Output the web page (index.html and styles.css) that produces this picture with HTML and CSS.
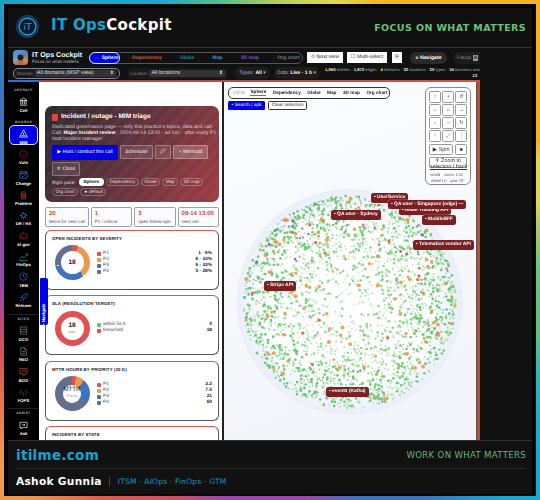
FILE: index.html
```html
<!DOCTYPE html>
<html lang="en">
<head>
  <meta charset="UTF-8">
  <title>IT Ops Cockpit</title>
  <link rel="stylesheet" href="styles.css">
</head>
<body>
<div class="rainbow">
  <div class="shell">

    <!-- banner -->
    <header class="banner">
      <div class="banner-left">
        <svg class="banner-logo" viewBox="0 0 24 24" width="23" height="23">
          <circle cx="12" cy="12" r="11.2" fill="#0d1a2b" stroke="#1d3f6e" stroke-width="1.4"/>
          <circle cx="12" cy="12" r="8.8" fill="none" stroke="#12a5d2" stroke-width="1.5"/>
          <text x="12" y="15.6" text-anchor="middle" class="logo-text">iT</text>
        </svg>
        <div class="banner-title"><span class="cyan">IT Ops</span><span>Cockpit</span></div>
      </div>
      <div class="banner-tag">FOCUS ON WHAT MATTERS</div>
    </header>

    <section class="app">
      <!-- toolbar -->
      <div class="top">
        <div class="top-row">
          <div class="brand">
            <div class="brand-logo"></div>
            <div>
              <div class="brand-name">IT Ops Cockpit</div>
              <div class="brand-sub">Focus on what matters.</div>
            </div>
          </div>
          <div class="tabs">
            <span class="tab tab-on">Sphere</span>
            <span class="tab t-red">Dependency</span>
            <span class="tab t-teal">Globe</span>
            <span class="tab t-blue">Map</span>
            <span class="tab t-purple">3D map</span>
            <span class="tab t-grey">Org chart</span>
          </div>
          <span class="wbtn w-next">⟐ Next view</span>
          <span class="wbtn w-multi">☐ Multi-select</span>
          <span class="wbtn w-x">⎘</span>
          <span class="nav-pill">≡ Navigate</span>
          <span class="focus-pill">Focus <b>A</b></span>
        </div>
        <div class="top-row row2">
          <div class="sel sel-domain"><span class="sel-lab">Domain</span><span class="sel-box">All domains (MSP view)<i>⬍</i></span></div>
          <div class="sel sel-loc"><span class="sel-lab">Location</span><span class="sel-box">All locations<i>⬍</i></span></div>
          <div class="drop drop-types">Types: <b>All</b> ▾</div>
          <div class="drop drop-data">Data: <b>Live · 1 h</b> ▾</div>
          <div class="stats">
            <div class="stats-line"><b>1,060</b> entities · <b>1,873</b> edges · <b>4</b> domains · <b>32</b> locations · <b>20</b> types · <b>15</b> business areas</div>
            <div class="stats-more"><b>13</b></div>
          </div>
        </div>
      </div>
      <div class="stripe"></div>

      <div class="work">
        <!-- left rail -->
        <nav class="rail">
          <div class="rail-group">
            <div class="rail-head">OPERATE</div>
            <div class="rail-item">
              <svg viewBox="0 0 10 10" class="ico" stroke="#fff"><path d="M1 4 5 1l4 3H1ZM2 4v4M4 4v4M6 4v4M8 4v4M1 9h8"/></svg>
              <span>Cell</span>
            </div>
          </div>
          <div class="rail-group">
            <div class="rail-head">BOARDS</div>
            <div class="rail-item rail-on">
              <svg viewBox="0 0 10 10" class="ico" stroke="#fff"><path d="M5 1 9.5 9h-9ZM5 4v2.5M2.5 7.5h5"/></svg>
              <span>MIM</span>
            </div>
            <div class="rail-item">
              <svg viewBox="0 0 10 10" class="ico" stroke="#8f1d22"><path d="M5 .8 9 2.3V5c0 2.2-1.8 3.6-4 4.3C2.8 8.6 1 7.2 1 5V2.3ZM3.5 5 4.6 6l2-2"/></svg>
              <span>Vuln</span>
            </div>
            <div class="rail-item">
              <svg viewBox="0 0 10 10" class="ico" stroke="#2f77e6"><path d="M1 2h8v7H1ZM1 4h8M3 1v2M7 1v2M3.5 6.5 4.6 7.5l2-2"/></svg>
              <span>Change</span>
            </div>
            <div class="rail-item">
              <svg viewBox="0 0 10 10" class="ico" stroke="#b8393a"><path d="M3 1h4v3H3ZM2.5 4h5v2.5h-5ZM3 6.5h4V9H3Z"/></svg>
              <span>Problem</span>
            </div>
            <div class="rail-item">
              <svg viewBox="0 0 10 10" class="ico" stroke="#2f77e6"><circle cx="5" cy="5" r="2.2"/><path d="M5 .8v1.8M5 7.4v1.8M.8 5h1.8M7.4 5h1.8M2 2l1.3 1.3M6.7 6.7 8 8M8 2 6.7 3.3M3.3 6.7 2 8"/></svg>
              <span>DR / HA</span>
            </div>
            <div class="rail-item">
              <svg viewBox="0 0 10 10" class="ico" stroke="#8f1d22"><path d="M1.5 3h7v5.5h-7ZM5 1v2M3.5 5h.5M6 5h.5M3.5 7h3M.5 5v2M9.5 5v2"/></svg>
              <span>AI gov</span>
            </div>
            <div class="rail-item">
              <svg viewBox="0 0 10 10" class="ico" stroke="#1c8f8c"><path d="M.5 8 3.5 5l2 1.5L9.5 2M7.5 2h2v2M.5 9.5h9"/></svg>
              <span>FinOps</span>
            </div>
            <div class="rail-item">
              <svg viewBox="0 0 10 10" class="ico" stroke="#3d5be0"><circle cx="5" cy="5" r="4.2"/><path d="M5 2.3V5l2 2"/></svg>
              <span>TBM</span>
            </div>
            <div class="rail-item">
              <svg viewBox="0 0 10 10" class="ico" stroke="#2f77e6"><path d="M9.3.7C6.500.9 4.600 2.400 3.400 5l1.600 1.600C7.600 5.400 9.100 3.500 9.300.7ZM3.400 5 1.500 5.300M5 6.600 4.700 8.500M2.800 7.200 1 9"/></svg>
              <span>Release</span>
            </div>
          </div>
          <div class="rail-group ruled">
            <div class="rail-head">SITES</div>
            <div class="rail-item">
              <svg viewBox="0 0 10 10" class="ico" stroke="#77797d"><path d="M1.5 1h7v8h-7ZM1.5 3.7h7M1.5 6.3h7"/></svg>
              <span>DCO</span>
            </div>
            <div class="rail-item">
              <svg viewBox="0 0 10 10" class="ico" stroke="#77797d"><path d="M2 .8h4l2.3 2.3v6.1H2ZM6 .8v2.3h2.3M3.5 5h3.3M3.5 7h3.3"/></svg>
              <span>REO</span>
            </div>
            <div class="rail-item">
              <svg viewBox="0 0 10 10" class="ico" stroke="#b8393a"><path d="M1 1.5h8v6H1ZM3 3.5h1.500v2M5.500 3.500H7v2M3 9h4"/></svg>
              <span>BOO</span>
            </div>
            <div class="rail-item">
              <svg viewBox="0 0 10 10" class="ico" stroke="#3a3d42"><path d="M5 4.4v4.6M3.4 3a2.3 2.3 0 0 0 0 3.2M6.6 3a2.3 2.3 0 0 1 0 3.2M2 1.7a4.3 4.3 0 0 0 0 5.8M8 1.7a4.3 4.3 0 0 1 0 5.8"/></svg>
              <span>FOPS</span>
            </div>
          </div>
          <div class="rail-group ruled ruled-last">
            <div class="rail-head">ASSIST</div>
            <div class="rail-item">
              <svg viewBox="0 0 10 10" class="ico" stroke="#e8e8e8"><path d="M1 1.5h8v5.700H4L2.500 9V7.200H1ZM3.300 4.300h3.400M6 3.300v2"/></svg>
              <span>Ask</span>
            </div>
          </div>
        </nav>

        <!-- practice page -->
        <main class="page">
          <div class="side-tab"><span>• Navigate</span></div>

          <div class="hero">
            <div class="hero-title"><span class="hero-ico"></span>Incident / outage - MIM triage</div>
            <p class="hero-text">Dedicated governance page — only this practice's topics, data and call.<br>Call: <b>Major incident review</b> · 2026-09-14 13:00 · ad hoc · after every P1 ·<br>host incident manager</p>
            <div class="hero-btns">
              <span class="hbtn hbtn-main">▶ Host / conduct this call</span>
              <span class="hbtn hbtn-sch">Scheduler</span>
              <span class="hbtn hbtn-ico">🖉</span>
              <span class="hbtn hbtn-mer">+ Mermaid</span>
              <span class="hbtn hbtn-cls">✕ Close</span>
            </div>
            <div class="hero-chips">
              <span class="chip-lab">Right pane:</span>
              <span class="chip chip-on">Sphere</span>
              <span class="chip">Dependency</span>
              <span class="chip">Globe</span>
              <span class="chip">Map</span>
              <span class="chip">3D map</span>
              <span class="chip">Org chart</span>
              <span class="chip">★ default</span>
            </div>
          </div>

          <div class="kpis">
            <div class="kpi"><b>20</b><span>items for next call</span></div>
            <div class="kpi"><b>1</b><span>P1 / critical</span></div>
            <div class="kpi"><b>3</b><span>open follow-ups</span></div>
            <div class="kpi"><b>09-14 13:00</b><span>next call</span></div>
          </div>

          <div class="chart-card">
            <h3>OPEN INCIDENTS BY SEVERITY</h3>
            <div class="chart-body">
              <div class="ring ring-sev"><div class="hole"><b>18</b></div></div>
              <ul class="legend">
                <li><i class="d-red"></i>P1<b>1 · 6%</b></li>
                <li><i class="d-org"></i>P2<b>6 · 33%</b></li>
                <li><i class="d-blu"></i>P3<b>6 · 33%</b></li>
                <li><i class="d-sla"></i>P4<b>5 · 28%</b></li>
              </ul>
            </div>
          </div>

          <div class="chart-card">
            <h3>SLA (RESOLUTION TARGET)</h3>
            <div class="chart-body">
              <div class="ring ring-sla"><div class="hole"><b>18</b><small>open</small></div></div>
              <ul class="legend">
                <li><i class="d-grn"></i>within SLA<b>0</b></li>
                <li><i class="d-red"></i>breached<b>18</b></li>
              </ul>
            </div>
          </div>

          <div class="chart-card">
            <h3>MTTR HOURS BY PRIORITY (30 D)</h3>
            <div class="chart-body">
              <div class="ring ring-mttr"><div class="hole hole-sm"><b class="wide">MTTR</b><small>Priority</small></div></div>
              <ul class="legend">
                <li><i class="d-red"></i>P1<b>3.2</b></li>
                <li><i class="d-org"></i>P2<b>7.5</b></li>
                <li><i class="d-blu"></i>P3<b>21</b></li>
                <li><i class="d-sla"></i>P4<b>60</b></li>
              </ul>
            </div>
          </div>

          <div class="chart-card">
            <h3>INCIDENTS BY STATE</h3>
          </div>
        </main>

        <!-- sphere -->
        <section class="pane">
          <canvas id="sphere" class="sphere" width="252" height="357"></canvas>

          <div class="viewbar">
            <span class="vb-lab">VIEW</span>
            <span class="vb vb-on">Sphere</span>
            <span class="vb">Dependency</span>
            <span class="vb">Globe</span>
            <span class="vb">Map</span>
            <span class="vb">3D map</span>
            <span class="vb">Org chart</span>
          </div>
          <div class="pane-btns">
            <span class="pbtn pbtn-blue">• Search / apk</span>
            <span class="pbtn">Clear selection</span>
          </div>

          <div class="ctrls">
            <div class="ctrl-grid">
              <span>↑</span><span>+</span><span>↺</span>
              <span>←</span><span>⌂</span><span>→</span>
              <span>↓</span><span>−</span><span>↻</span>
              <span>↑</span><span>⤢</span><span>⋮</span>
            </div>
            <div class="ctrl-spin"><span class="spin">▶ Spin</span><span class="stop">■</span></div>
            <div class="ctrl-zoom">✛ Zoom to<br><u>selection / back</u></div>
            <div class="ctrl-note">world · zoom 1.0x ·<br>detail L0 · yaw 70°</div>
          </div>

          <span class="tag tag-tracking">• Issue Tracking API</span>
          <span class="tag tag-user">• UserService</span>
          <span class="tag tag-qasg">• QA user · Singapore (edge) —</span>
          <span class="tag tag-mobile">• MobileBFF</span>
          <span class="tag tag-qasy">• QA user · Sydney</span>
          <span class="tag tag-tele">• Telematics vendor API</span>
          <span class="tag tag-stripe">• Stripe API</span>
          <span class="tag tag-kafka">• events (Kafka)</span>
        </section>
      </div>
    </section>

    <!-- footer -->
    <footer class="foot">
      <div class="foot-top">
        <span class="foot-site">itilme.com</span>
        <span class="foot-tag">WORK ON WHAT MATTERS</span>
      </div>
      <div class="foot-bottom">
        <span class="foot-name">Ashok Gunnia</span>
        <span class="foot-topics">ITSM · AIOps · FinOps · GTM</span>
      </div>
    </footer>

  </div>
</div>
<script src="sphere.js"></script>
</body>
</html>
```

FILE: styles.css
```css
* {
  box-sizing: border-box;
}

html,
body {
  margin: 0;
  padding: 0;
  background: #000;
}

.rainbow {
  width: 540px;
  height: 500px;
  padding: 4px;
  background: conic-gradient(#a8cc60 0deg, #c8d456 7deg, #e0d84a 15deg, #f4b223 25deg, #f4b223 68deg, #e0d84a 72deg, #e0d84a 80deg, #b5c870 84deg, #6cc07a 95deg, #5fbf85 108deg, #2fb5b5 115deg, #15a9d0 127deg, #15a9d0 137deg, #3f72bf 148deg, #3f72bf 160deg, #9a48a8 172deg, #9a48a8 190deg, #c94f68 200deg, #e25a50 214deg, #ee9a4a 225deg, #ee9a4a 232deg, #e0604f 245deg, #c94f68 252deg, #9a48a8 262deg, #9a48a8 280deg, #3f72bf 288deg, #3f72bf 300deg, #1aa6c8 315deg, #19a7cf 335deg, #5fbf85 350deg, #a8cc60 360deg);
  overflow: hidden;
}

.shell {
  height: 492px;
  background: #111;
  border: 4px solid #050505;
  display: flex;
  flex-direction: column;
  font-family: "DejaVu Sans", sans-serif;
}

/* banner */
.banner {
  height: 40px;
  flex: none;
  background: #101010;
  border-bottom: 1px solid #333;
  padding: 0 6px 2px 8px;
  display: flex;
  justify-content: space-between;
  align-items: center;
}

.banner-left {
  display: flex;
  align-items: center;
  gap: 12px;
}

.logo-text {
  font: 10px "DejaVu Sans", sans-serif;
  fill: #12a5d2;
}

.banner-title {
  font-size: 15px;
  font-weight: bold;
  letter-spacing: 0.3px;
  color: #fff;
  margin-top: -3px;
}

.cyan {
  color: #12a5d2;
}

.banner-tag {
  font-size: 9.5px;
  font-weight: bold;
  letter-spacing: 0.4px;
  color: #6cc07a;
  margin-top: 2px;
}

/* app screenshot */
.app {
  flex: none;
  width: 472px;
  height: 392px;
  overflow: hidden;
  background: #111;
  display: flex;
  flex-direction: column;
  font-family: "Liberation Sans", sans-serif;
  text-rendering: geometricPrecision;
  filter: blur(0.3px);
}

.top {
  height: 33px;
  flex: none;
  padding: 3px 0 0 5px;
}

.top-row {
  display: flex;
  align-items: center;
  height: 13px;
  white-space: nowrap;
  color: #ddd;
}

.row2 {
  margin-top: 3px;
  height: 12px;
}

.brand {
  width: 76px;
  flex: none;
  display: flex;
  align-items: center;
  gap: 4px;
}

.brand-logo {
  width: 15px;
  height: 15px;
  flex: none;
  border-radius: 4px;
  background: radial-gradient(circle, #18202b 0 28%, transparent 30%), conic-gradient(#5f8fd0, #5a7fa8, #d88c46, #a86a3a, #8fa0b0, #4f94d0, #5f8fd0);
}

.brand-name {
  font-size: 7.1px;
  font-weight: bold;
  color: #fff;
  line-height: 8px;
}

.brand-sub {
  font-size: 4.6px;
  color: #bbb;
  line-height: 6px;
}

.tabs {
  width: 214px;
  flex: none;
  height: 12px;
  border: 1px solid #555;
  border-radius: 6px;
  display: flex;
  align-items: center;
  font-size: 5px;
  font-weight: bold;
}

.tab {
  padding: 0 6.8px;
}

.tab::before {
  content: "·";
  margin-right: 3px;
  opacity: 0.5;
}

.tab-on {
  width: 35px;
  height: 12px;
  margin-left: -1px;
  padding: 0 0 0 7px;
  line-height: 10px;
  background: #0000e6;
  color: #fff;
  border: 1px solid #dfe3f0;
  border-radius: 6px;
  margin-right: 1px;
}

.t-red {
  color: #d9573f;
}

.t-teal {
  color: #1f8a8c;
}

.t-blue {
  color: #3d8ee0;
}

.t-purple {
  color: #7d4fc0;
}

.t-grey {
  color: #777;
}

.wbtn {
  margin-left: 4px;
  height: 11px;
  line-height: 11px;
  flex: none;
  background: #fff;
  color: #222;
  font-size: 5.2px;
  text-align: center;
}

.w-next {
  width: 36px;
}

.w-multi {
  width: 40px;
}

.w-x {
  width: 10px;
  margin-left: 5px;
}

.nav-pill {
  margin-left: 8px;
  width: 37px;
  height: 12px;
  line-height: 12px;
  flex: none;
  text-align: center;
  background: #2a2a2a;
  color: #fff;
  border-radius: 6px;
  font-size: 5.2px;
  font-weight: bold;
}

.focus-pill {
  margin-left: 6px;
  padding-left: 4px;
  height: 12px;
  line-height: 12px;
  width: 40px;
  flex: none;
  background: #1c1c1c;
  color: #999;
  border-radius: 6px;
  font-size: 5.2px;
}

.focus-pill b {
  background: #999;
  color: #222;
  padding: 0 1px;
}

.sel {
  height: 11px;
  display: flex;
  align-items: center;
  border-radius: 5px;
  background: #1a1a1a;
  font-size: 4.6px;
  color: #888;
  padding: 0 3px;
  gap: 2px;
  flex: none;
}

.sel-domain {
  width: 107px;
  border: 1px solid #7d8496;
}

.sel-loc {
  width: 101px;
  margin-left: 7px;
}

.sel-box {
  flex: 1;
  position: relative;
  height: 7px;
  line-height: 7px;
  font-size: 5.4px;
  color: #ddd;
  background: #333;
  padding-left: 2px;
  border-radius: 1px;
}

.sel-box i {
  position: absolute;
  right: 2px;
  top: 0;
  font-style: normal;
  font-size: 5px;
}

.drop {
  height: 12px;
  line-height: 12px;
  flex: none;
  font-size: 5px;
  text-align: center;
  background: #1c1c1c;
  border-radius: 5px;
  color: #bbb;
}

.drop b {
  color: #fff;
}

.drop-types {
  width: 35px;
  margin-left: 7px;
}

.drop-data {
  width: 45px;
  margin-left: 4px;
}

.stats {
  margin-left: 6px;
  width: 155px;
  flex: none;
  font-size: 4.2px;
  line-height: 5.5px;
  color: #aaa;
  overflow: hidden;
  margin-top: -1px;
}

.stats b {
  color: #eee;
}

.stats-more {
  text-align: right;
  padding-right: 3px;
}

.stripe {
  height: 2px;
  flex: none;
  margin-top: -1px;
  background: linear-gradient(to right, #2f6fd0 0 31px, #a0434a 31px, #b84a48 45%, #d9503f);
}

.work {
  flex: 1;
  display: flex;
  min-height: 0;
}

/* rail */
.rail {
  width: 31px;
  flex: none;
  background: #000;
  padding-top: 5.5px;
  text-align: center;
  color: #fff;
}

.rail-group {
  margin-top: 7px;
}

.rail-group:first-child {
  margin-top: 0;
}

.rail-head {
  height: 5px;
  line-height: 5px;
  font-size: 3.4px;
  font-weight: bold;
  letter-spacing: 0.4px;
  color: #bbb;
}

.ruled {
  margin-top: 6px;
  padding-top: 1.5px;
  border-top: 1px solid #222;
}

.ruled-last {
  margin-top: 4.5px;
}

.ruled-last .rail-head {
  margin-top: 1px;
}

.rail-item {
  height: 20.4px;
  padding-top: 4.5px;
  font-size: 4.2px;
  font-weight: bold;
  display: flex;
  flex-direction: column;
  align-items: center;
}

.rail-on {
  background: #0000e6;
  border: 1px solid #dde;
  border-radius: 5px;
  margin: 0 1px;
  padding-top: 3.5px;
}

.ico {
  width: 9px;
  height: 9px;
  flex: none;
  fill: none;
  stroke-width: 0.8;
  margin-bottom: 1.5px;
}

/* left page */
.page {
  position: relative;
  width: 185px;
  flex: none;
  background: #fff;
  border-right: 2px solid #222;
  padding: 24px 3px 0 6px;
  overflow: hidden;
  color: #222;
}

.side-tab {
  position: absolute;
  left: 1px;
  top: 196px;
  width: 8px;
  height: 47px;
  background: #0000e6;
  border-radius: 1px 2px 2px 1px;
  color: #fff;
  font-size: 4.5px;
  font-weight: bold;
}

.side-tab span {
  display: block;
  writing-mode: vertical-rl;
  transform: rotate(180deg);
  line-height: 8px;
  height: 47px;
  text-align: left;
}

.hero {
  height: 95.5px;
  border-radius: 7px;
  padding: 6px 7px;
  color: #fff;
  background: repeating-linear-gradient(135deg, rgba(255, 255, 255, 0.025) 0 5px, rgba(0, 0, 0, 0.025) 5px 10px), linear-gradient(120deg, #2e2a31 0%, #5f333d 45%, #a23e44 100%);
}

.hero-title {
  font-size: 6.5px;
  font-weight: bold;
  display: flex;
  align-items: center;
  gap: 3px;
  line-height: 10px;
}

.hero-ico {
  width: 6px;
  height: 7px;
  background: #d9483c;
  border-radius: 1px;
}

.hero-text {
  margin: 2px 0 3px;
  font-size: 5.1px;
  line-height: 6px;
  color: #d8d0d4;
  white-space: nowrap;
}

.hero-text b {
  color: #fff;
}

.hero-btns {
  display: flex;
  flex-wrap: wrap;
  gap: 2px;
}

.hbtn {
  height: 14px;
  line-height: 12px;
  padding: 0 2px;
  font-size: 5px;
  border: 1px solid rgba(255, 255, 255, 0.28);
  border-radius: 1.5px;
  background: rgba(255, 255, 255, 0.1);
  color: #f3e9ea;
  white-space: nowrap;
  text-align: center;
}

.hbtn-main {
  width: 66px;
  height: 15px;
  line-height: 15px;
  border: 0;
  background: #0000e6;
  color: #fff;
}

.hbtn-sch {
  width: 33px;
}

.hbtn-ico {
  width: 16px;
}

.hbtn-mer {
  width: 35px;
  background: rgba(255, 255, 255, 0.2);
}

.hbtn-cls {
  width: 28px;
  padding: 0;
}

.hero-chips {
  display: flex;
  flex-wrap: wrap;
  align-items: center;
  gap: 2px;
  margin-top: 2px;
  font-size: 4.6px;
}

.chip-lab {
  margin-right: 1px;
  color: #ddd;
}

.chip {
  height: 8px;
  line-height: 6px;
  padding: 0 2.5px;
  border: 1px solid rgba(255, 255, 255, 0.28);
  border-radius: 4px;
  color: #eadcdd;
}

.chip-on {
  background: #fff;
  color: #222;
  font-weight: bold;
  padding: 0 4px;
}

.kpis {
  display: grid;
  grid-template-columns: repeat(4, 1fr);
  gap: 2px;
  margin: 5.5px 0 3px;
}

.kpi {
  height: 19.5px;
  padding: 2.5px 3px;
  border: 1px solid #9aa0aa;
  border-radius: 2px;
  display: flex;
  flex-direction: column;
  gap: 1px;
  background: #fbfbfd;
}

.kpi b {
  font-size: 6px;
  line-height: 7.5px;
  color: #d9483c;
  white-space: nowrap;
}

.kpi span {
  font-size: 4.6px;
  line-height: 5px;
  color: #555;
  white-space: nowrap;
}

.chart-card {
  height: 60px;
  margin-bottom: 5.5px;
  padding: 5px 6px 0;
  border: 1px solid #555;
  border-top: 1px solid #e05252;
  border-bottom-width: 1.2px;
  border-radius: 6px;
  background: #fff;
}

.chart-card h3 {
  margin: 0;
  font-size: 4.4px;
  line-height: 6px;
  letter-spacing: 0.1px;
  color: #222;
}

.chart-body {
  display: flex;
  align-items: center;
  margin-top: 3.5px;
  padding-left: 2.5px;
}

.ring {
  width: 35px;
  height: 35px;
  flex: none;
  border-radius: 50%;
  display: flex;
  align-items: center;
  justify-content: center;
}

.ring-sev {
  background: conic-gradient(#e05252 0 5.5%, #fff 5.5% 6%, #eb9a4d 6% 38.5%, #fff 38.5% 39%, #3f72bf 39% 71.5%, #fff 71.5% 72%, #646f8e 72% 99.5%, #fff 99.5%);
}

.ring-sla {
  background: conic-gradient(#e05252 0 100%);
}

.ring-mttr {
  background: conic-gradient(#e05252 0 3.5%, #eb9a4d 3.5% 11.7%, #3f72bf 11.7% 34.6%, #646f8e 34.6% 100%);
}

.hole {
  width: 23px;
  height: 23px;
  border-radius: 50%;
  background: #fff;
  display: flex;
  flex-direction: column;
  align-items: center;
  justify-content: center;
  font-size: 6.5px;
  line-height: 8px;
  color: #222;
}

.hole-sm {
  width: 18px;
  height: 18px;
}

.hole .wide {
  font-weight: normal;
  font-size: 6.2px;
  color: #222;
  margin-top: -3px;
}

.hole small {
  font-size: 3.6px;
  line-height: 5px;
  color: #999;
}

.legend {
  list-style: none;
  margin: 0 0 0 7px;
  padding: 0;
  flex: 1;
  font-size: 4.8px;
  color: #444;
}

.legend li {
  display: flex;
  align-items: center;
  height: 6px;
  line-height: 6px;
}

.legend i {
  width: 4px;
  height: 4px;
  margin-right: 2.5px;
  border-radius: 1px;
}

.legend b {
  margin-left: auto;
  color: #222;
}

.d-red {
  background: #e05252;
}

.d-org {
  background: #eb9a4d;
}

.d-blu {
  background: #3f72bf;
}

.d-sla {
  background: #646f8e;
}

.d-grn {
  background: #5dc46a;
}

/* sphere pane */
.pane {
  position: relative;
  flex: 1;
  background: linear-gradient(160deg, #fbfcfe, #f2f4fa);
  border-right: 3.5px solid #c9452f;
  padding: 5px 4px 0;
  overflow: hidden;
  box-shadow: inset -1px 0 0 #555;
}

.sphere {
  position: absolute;
  left: 0;
  top: 0;
}

.viewbar {
  position: relative;
  width: 162px;
  height: 11.5px;
  background: #fff;
  border: 1px solid #333;
  border-radius: 5px;
  display: flex;
  align-items: center;
  padding-left: 4px;
  gap: 6.5px;
  font-size: 4.7px;
  font-weight: bold;
  color: #222;
  white-space: nowrap;
}

.vb-lab {
  color: #999;
  font-weight: normal;
  margin-right: -1px;
}

.vb-on {
  border-bottom: 1px solid #d9483c;
  line-height: 6px;
}

.pane-btns {
  position: relative;
  display: flex;
  gap: 3px;
  margin-top: 2px;
  font-size: 4.8px;
}

.pbtn {
  height: 9.5px;
  line-height: 8px;
  width: 39px;
  text-align: center;
  border: 1px solid #333;
  border-radius: 1.5px;
  background: #fff;
  color: #222;
}

.pbtn-blue {
  width: 37px;
  background: #0000e6;
  border: 0;
  line-height: 9.5px;
  color: #fff;
}

.ctrls {
  position: absolute;
  left: 201px;
  top: 5px;
  width: 46px;
  height: 98px;
  padding: 3px;
  border: 1px solid #888;
  border-radius: 6px;
  background: #fff;
  font-size: 5px;
  color: #333;
}

.ctrl-grid {
  display: grid;
  grid-template-columns: repeat(3, 12px);
  grid-auto-rows: 11.5px;
  gap: 1.5px 1.2px;
}

.ctrl-grid span,
.spin,
.stop {
  border: 1px solid #999;
  border-radius: 1.5px;
  text-align: center;
  line-height: 10px;
  background: #fff;
}

.ctrl-spin {
  display: flex;
  gap: 2px;
  margin-top: 2px;
  height: 11px;
}

.spin {
  width: 25px;
  font-size: 5.5px;
}

.stop {
  width: 12px;
}

.ctrl-zoom {
  width: 38px;
  height: 11px;
  margin-top: 2px;
  border: 1px solid #999;
  border-radius: 1.5px;
  text-align: center;
  white-space: nowrap;
  font-size: 5.4px;
  line-height: 6.5px;
}

.ctrl-note {
  margin-top: 4px;
  text-align: center;
  font-size: 4.1px;
  line-height: 6px;
  color: #555;
  white-space: nowrap;
}

.tag {
  position: absolute;
  height: 9.5px;
  line-height: 9.5px;
  padding: 0 3px;
  background: #7a1f22;
  border-radius: 2.5px;
  box-shadow: 0 0 0 0.5px rgba(255, 255, 255, 0.3);
  color: #fff;
  font-size: 4.9px;
  font-weight: bold;
  white-space: nowrap;
}

.tag-user {
  left: 147px;
  top: 111px;
}

.tag-qasg {
  left: 164px;
  top: 117.5px;
}

.tag-tracking {
  left: 175px;
  top: 123.5px;
}

.tag-mobile {
  left: 198px;
  top: 133px;
}

.tag-qasy {
  left: 107px;
  top: 128px;
}

.tag-tele {
  left: 189px;
  top: 158px;
}

.tag-stripe {
  left: 40px;
  top: 199px;
}

.tag-kafka {
  left: 102px;
  top: 305px;
}

/* footer */
.foot {
  flex: 1;
  background: #111;
  border-top: 1px solid #333;
  padding: 0 6px 0 8px;
}

.foot-top {
  height: 28px;
  border-bottom: 1px solid #2a2a2a;
  display: flex;
  justify-content: space-between;
  align-items: center;
}

.foot-site {
  font-size: 13.5px;
  font-weight: bold;
  letter-spacing: 0.3px;
  color: #12a5d2;
}

.foot-tag {
  font-size: 8.6px;
  letter-spacing: 0.3px;
  color: #5fb878;
}

.foot-bottom {
  display: flex;
  align-items: center;
  height: 25px;
}

.foot-name {
  font-size: 10.6px;
  font-weight: bold;
  letter-spacing: 0.3px;
  color: #fff;
  padding-right: 7px;
  margin-right: 8px;
  border-right: 1px solid #444;
  line-height: 9px;
}

.foot-topics {
  font-size: 7.5px;
  letter-spacing: 0.2px;
  color: #1299c4;
}
```

FILE: sphere.js
```js
// scatter of entities on the globe, same seed every load
var canvas = document.getElementById("sphere");
var ctx = canvas.getContext("2d");
var cx = 125.7, cy = 220, R = 113;

var seed = 20260914;
function rnd() {
  seed = (seed + 0x6d2b79f5) | 0;
  var t = Math.imul(seed ^ (seed >>> 15), 1 | seed);
  t = (t + Math.imul(t ^ (t >>> 7), 61 | t)) ^ t;
  return ((t ^ (t >>> 14)) >>> 0) / 4294967296;
}

// halo and pale middle
var halo = ctx.createRadialGradient(cx, cy, 0, cx, cy, R);
halo.addColorStop(0, "#ffffff");
halo.addColorStop(0.72, "#ffffff");
halo.addColorStop(0.9, "#f0f3fb");
halo.addColorStop(1, "#e9eef9");
ctx.fillStyle = halo;
ctx.beginPath();
ctx.arc(cx, cy, R, 0, Math.PI * 2);
ctx.fill();

function dot(x, y, r, color, alpha) {
  ctx.globalAlpha = alpha;
  ctx.fillStyle = color;
  ctx.beginPath();
  ctx.arc(x, y, r, 0, Math.PI * 2);
  ctx.fill();
}

for (var i = 0; i < 3000; i++) {
  var a = rnd() * Math.PI * 2;
  var d = Math.pow(rnd(), 0.37) * R * 0.94;
  var x = cx + Math.cos(a) * d;
  var y = cy + Math.sin(a) * d;
  var p = rnd();
  var upper = y < cy - 30 && d > R * 0.55;
  var fade = d < R * 0.6 ? 0.75 : 1;

  if (p < 0.85) {
    var big = rnd() < 0.3;
    dot(x, y, big ? 1.3 : 0.9, "#6cc870", (big ? 1 : 0.4 + rnd() * 0.5) * fade);
  } else if (p < 0.89) {
    dot(x, y, 1.1 + rnd() * 0.7, "#f6c9c0", 0.35);
  } else if (p < 0.92) {
    dot(x, y, 1.4 + rnd() * 0.7, "#eb9a4d", 0.9);
  } else if (p < 0.924) {
    dot(x, y, 1.6, "#e8603c", 0.95);
  } else if (upper && p < 0.965) {
    var mix = ["#3f72bf", "#646f8e", "#a9b2c9", "#9a5fc0", "#d9483c"];
    dot(x, y, 1 + rnd() * 0.6, mix[Math.floor(rnd() * mix.length)], 0.85);
  } else {
    dot(x, y, 0.9, "#6cc870", 0.55);
  }
}
ctx.globalAlpha = 1;
```
